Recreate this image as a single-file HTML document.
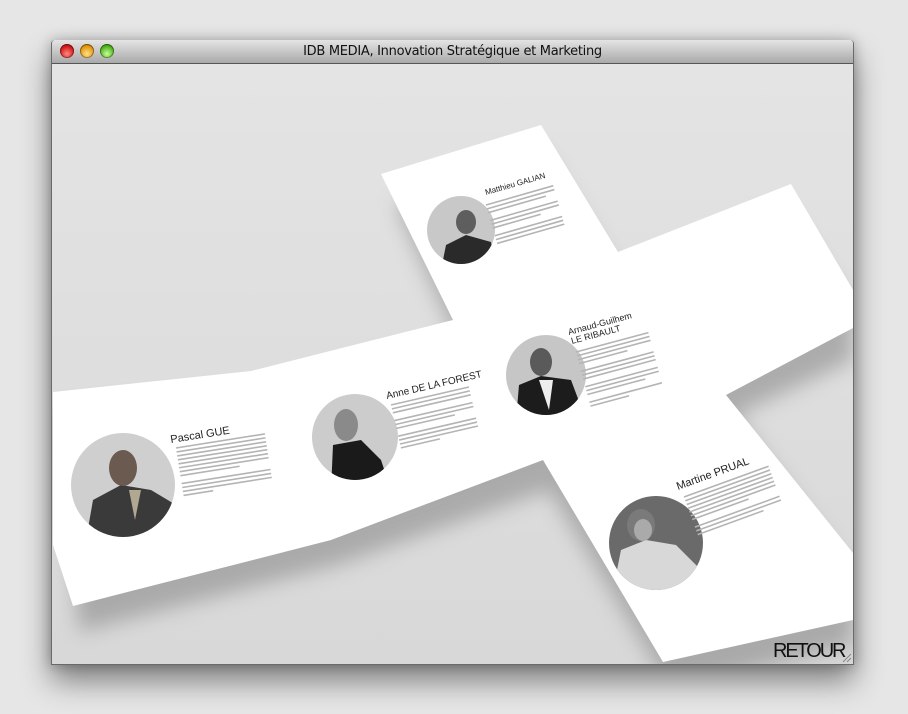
<!DOCTYPE html>
<html><head><meta charset="utf-8"><style>
html,body{margin:0;padding:0;width:908px;height:714px;overflow:hidden;background:#e6e6e6;font-family:"Liberation Sans",sans-serif}
#win{position:absolute;left:51px;top:40px;width:801px;height:624px;border:1px solid #6a6a6a;border-top:none;box-shadow:0 16px 30px rgba(0,0,0,.45),0 0 12px rgba(0,0,0,.25);background:#e2e2e2;border-radius:4px 4px 0 0;overflow:hidden}
#tb{position:absolute;left:0;top:0;width:801px;height:23px;background:linear-gradient(#e4e4e4,#a9a9a9);border-bottom:1px solid #555;text-align:center;font-size:13px;line-height:23px;color:#111;font-family:"DejaVu Sans","Liberation Sans",sans-serif;letter-spacing:-0.3px}
.b{position:absolute;top:4px;width:14px;height:14px;border-radius:50%;box-shadow:inset 0 0 0 1px rgba(0,0,0,.35)}
svg{position:absolute;left:0;top:24px}
</style></head><body>
<div id="win">
<div id="tb">IDB MEDIA, Innovation Stratégique et Marketing
<div class="b" style="left:8px;background:radial-gradient(circle at 50% 70%,#ff8a80,#d41a1a 60%,#8a0000)"></div>
<div class="b" style="left:28px;background:radial-gradient(circle at 50% 70%,#ffe08a,#e29a10 60%,#8a5a00)"></div>
<div class="b" style="left:48px;background:radial-gradient(circle at 50% 70%,#c8ff9a,#52b422 60%,#2a6a00)"></div>
</div>
<svg width="801" height="600" viewBox="51 64 801 600">
<defs>
<filter id="sh" x="-20%" y="-20%" width="140%" height="140%"><feGaussianBlur stdDeviation="10"/></filter>
<linearGradient id="bg" x1="0" y1="0" x2="0" y2="1"><stop offset="0" stop-color="#e4e4e4"/><stop offset="1" stop-color="#d8d8d8"/></linearGradient>
<clipPath id="c1"><circle cx="122" cy="485" r="52"/></clipPath>
<clipPath id="c2"><circle cx="354" cy="437" r="43"/></clipPath>
<clipPath id="c3"><circle cx="545" cy="375" r="40"/></clipPath>
<clipPath id="c4"><circle cx="460" cy="230" r="34"/></clipPath>
<clipPath id="c5"><circle cx="655" cy="543" r="47"/></clipPath>
</defs>
<rect x="51" y="64" width="801" height="600" fill="url(#bg)"/>
<g filter="url(#sh)" fill="#8a8a8a" opacity=".6">
<polygon points="58,412 255,392 458,345 395,205 540,150 620,280 785,215 852,310 852,360 735,415 852,580 852,645 670,690 548,490 336,565 78,632"/>
</g>
<polygon fill="#fff" points="52,392 250,371 452,320 380,174 540,125 617,252 790,184 852,290 852,328 725,395 852,553 852,620 662,662 542,460 330,540 72,606 52,545"/>
<!-- portraits -->
<g clip-path="url(#c1)"><rect x="60" y="430" width="130" height="110" fill="#cfcfcf"/><path d="M85 540 L92 500 L120 485 L150 490 L175 505 L180 540Z" fill="#3a3a3a"/><ellipse cx="122" cy="468" rx="14" ry="18" fill="#6a5a50"/><path d="M128 490 L134 520 L140 490Z" fill="#b0a890"/></g>
<g clip-path="url(#c2)"><rect x="300" y="390" width="110" height="100" fill="#cccccc"/><ellipse cx="345" cy="425" rx="12" ry="16" fill="#8a8a8a"/><path d="M330 490 L332 445 L360 440 L380 460 L390 490Z" fill="#1a1a1a"/></g>
<g clip-path="url(#c3)"><rect x="500" y="330" width="90" height="90" fill="#c6c6c6"/><ellipse cx="540" cy="362" rx="11" ry="14" fill="#5a5a5a"/><path d="M515 420 L518 385 L540 376 L570 380 L585 420Z" fill="#1c1c1c"/><path d="M538 380 L548 410 L552 380Z" fill="#eee"/></g>
<g clip-path="url(#c4)"><rect x="420" y="190" width="80" height="80" fill="#c8c8c8"/><ellipse cx="465" cy="222" rx="10" ry="12" fill="#5e5e5e"/><path d="M440 270 L445 245 L465 235 L490 242 L495 270Z" fill="#2a2a2a"/></g>
<g clip-path="url(#c5)"><rect x="600" y="490" width="110" height="110" fill="#6a6a6a"/><path d="M610 600 L620 550 L645 540 L675 545 L700 570 L705 600Z" fill="#d8d8d8"/><ellipse cx="640" cy="525" rx="14" ry="16" fill="#7a7a7a"/><ellipse cx="642" cy="530" rx="9" ry="11" fill="#aaa"/></g>
<!-- names -->
<g font-family="Liberation Sans,sans-serif" fill="#222" font-size="11">
<text transform="translate(170,443) rotate(-9)">Pascal GUE</text>
<text transform="translate(386,399) rotate(-13)" font-size="10">Anne DE LA FOREST</text>
<text transform="translate(568,335) rotate(-15)" font-size="9">Arnaud-Guilhem</text>
<text transform="translate(571,344) rotate(-15)" font-size="9">LE RIBAULT</text>
<text transform="translate(485,195) rotate(-16)" font-size="8">Matthieu GALIAN</text>
<text transform="translate(677,490) rotate(-20)" font-size="11">Martine PRUAL</text>
</g>
<!-- text blocks -->
<g stroke="#b4b4b4" stroke-width="1.6">
<g transform="translate(175,448) rotate(-9)"><path d="M0 0h90M0 4h90M0 8h90M0 12h90M0 16h90M0 20h90M0 24h90M0 28h60M0 36h90M0 40h90M0 44h90M0 48h30"/></g>
<g transform="translate(390,405) rotate(-13)"><path d="M0 0h80M0 4h80M0 8h80M0 16h80M0 20h80M0 24h60M0 32h80M0 36h80M0 40h80M0 44h40"/></g>
<g transform="translate(575,352) rotate(-15)"><path d="M0 0h75M0 4h75M0 8h75M0 12h50M0 20h75M0 24h75M0 28h75M0 36h75M0 40h75M0 44h60M0 52h75M0 56h40"/></g>
<g transform="translate(485,205) rotate(-16)"><path d="M0 0h70M0 4h70M0 8h60M0 16h70M0 20h70M0 24h50M0 32h70M0 36h70M0 40h70"/></g>
<g transform="translate(683,497) rotate(-20)"><path d="M0 0h90M0 4h90M0 8h90M0 12h90M0 16h90M0 20h90M0 24h60M0 32h90M0 36h90M0 40h70"/></g>
</g>
<text x="772" y="657" font-family="Liberation Sans,sans-serif" font-size="20" fill="#111" letter-spacing="-1.5" textLength="72">RETOUR</text>
<path d="M842 662 L850 654 M846 662 L850 658" stroke="#888" stroke-width="1"/>
</svg>
</div>
</body></html>
